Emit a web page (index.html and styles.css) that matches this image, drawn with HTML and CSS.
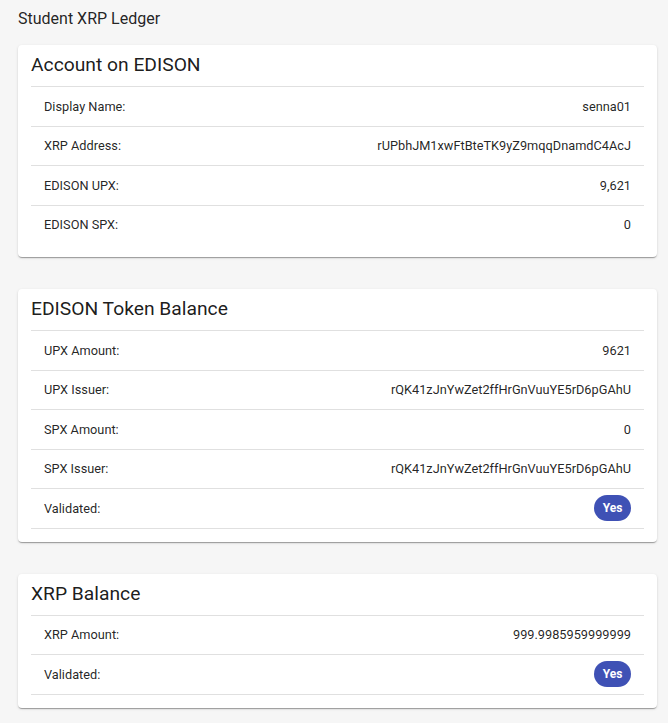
FILE: index.html
```html
<!DOCTYPE html>
<html>
<head>
<meta charset="utf-8">
<link rel="stylesheet" href="styles.css">
</head>
<body>
<div class="page">
  <div class="app-title">Student XRP Ledger</div>

  <section class="card">
    <h2 class="card-title">Account on EDISON</h2>
    <div class="list list-open">
      <div class="row"><span class="label">Display Name:</span><span class="value">senna01</span></div>
      <div class="row"><span class="label">XRP Address:</span><span class="value">rUPbhJM1xwFtBteTK9yZ9mqqDnamdC4AcJ</span></div>
      <div class="row"><span class="label">EDISON UPX:</span><span class="value">9,621</span></div>
      <div class="row"><span class="label">EDISON SPX:</span><span class="value">0</span></div>
    </div>
  </section>

  <section class="card">
    <h2 class="card-title">EDISON Token Balance</h2>
    <div class="list">
      <div class="row"><span class="label">UPX Amount:</span><span class="value">9621</span></div>
      <div class="row"><span class="label">UPX Issuer:</span><span class="value">rQK41zJnYwZet2ffHrGnVuuYE5rD6pGAhU</span></div>
      <div class="row"><span class="label">SPX Amount:</span><span class="value">0</span></div>
      <div class="row"><span class="label">SPX Issuer:</span><span class="value">rQK41zJnYwZet2ffHrGnVuuYE5rD6pGAhU</span></div>
      <div class="row"><span class="label">Validated:</span><span class="chip">Yes</span></div>
    </div>
  </section>

  <section class="card">
    <h2 class="card-title">XRP Balance</h2>
    <div class="list">
      <div class="row"><span class="label">XRP Amount:</span><span class="value">999.9985959999999</span></div>
      <div class="row"><span class="label">Validated:</span><span class="chip">Yes</span></div>
    </div>
  </section>
</div>
</body>
</html>
```

FILE: styles.css
```css
html, body {
  margin: 0;
  padding: 0;
  background: #f6f6f6;
  font-family: Roboto, "Liberation Sans", Arial, sans-serif;
  color: rgba(0, 0, 0, 0.87);
}

.page {
  padding: 9px 11px 16px 18px;
  display: flex;
  flex-direction: column;
  gap: 32px;
}

.app-title {
  font-size: 16px;
  line-height: 20px;
  height: 20px;
  margin-bottom: -16px;
  color: rgba(0, 0, 0, 0.87);
}

.card {
  background: #fff;
  border-radius: 4px;
  box-shadow: 0 2px 1px -1px rgba(0,0,0,0.2), 0 1px 1px 0 rgba(0,0,0,0.14), 0 1px 3px 0 rgba(0,0,0,0.12);
  padding: 0 13px 13px 13px;
}

.card-title {
  margin: 0;
  font-size: 19.25px;
  font-weight: 400;
  line-height: 28px;
  padding: 6px 0 7px 0;
  border-bottom: 1px solid #e0e0e0;
  color: rgba(0, 0, 0, 0.9);
}

.row {
  display: flex;
  align-items: center;
  justify-content: space-between;
  height: 38.5px;
  padding: 0 13px;
  border-bottom: 1px solid #e0e0e0;
  font-size: 12.75px;
}

.list-open .row:last-child {
  border-bottom: none;
}

.label,
.value {
  color: rgba(0, 0, 0, 0.87);
}

.chip {
  background: #3f51b5;
  color: #fff;
  font-weight: 700;
  font-size: 12px;
  height: 26px;
  line-height: 26px;
  padding: 0 8.5px;
  border-radius: 13px;
}
```
